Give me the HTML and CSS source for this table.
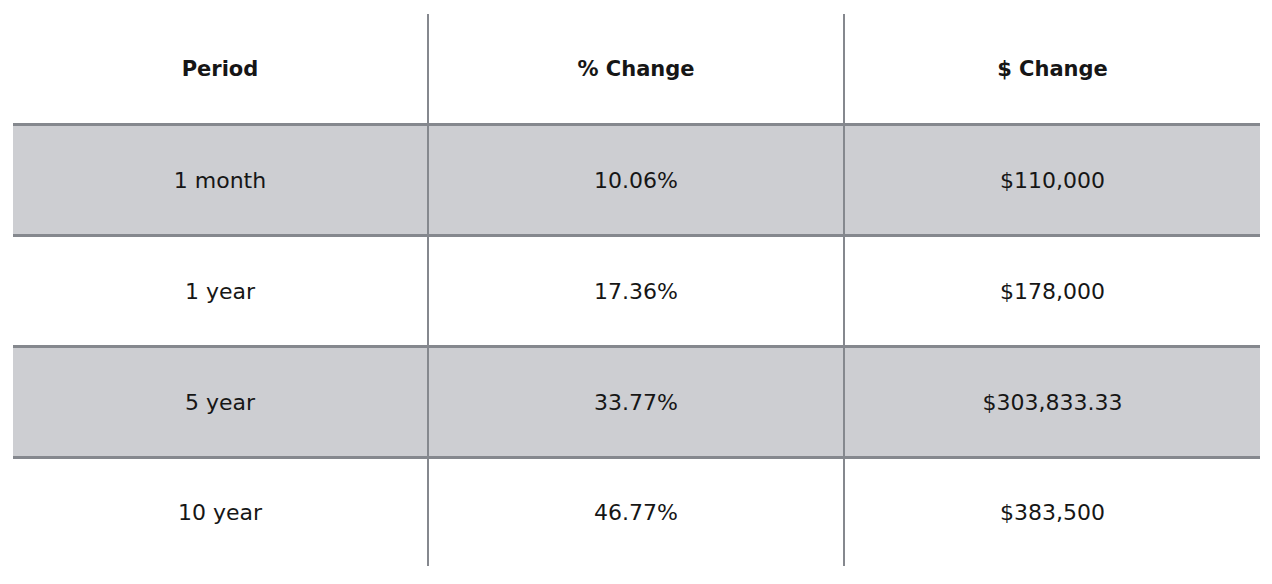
FILE: index.html
```html
<!DOCTYPE html>
<html>
<head>
<meta charset="utf-8">
<link rel="stylesheet" href="styles.css">
</head>
<body>
<div class="table">
  <div class="row head">
    <div class="cell">Period</div>
    <div class="cell">% Change</div>
    <div class="cell">$ Change</div>
  </div>
  <div class="row shaded">
    <div class="cell">1 month</div>
    <div class="cell">10.06%</div>
    <div class="cell">$110,000</div>
  </div>
  <div class="row">
    <div class="cell">1 year</div>
    <div class="cell">17.36%</div>
    <div class="cell">$178,000</div>
  </div>
  <div class="row shaded">
    <div class="cell">5 year</div>
    <div class="cell">33.77%</div>
    <div class="cell">$303,833.33</div>
  </div>
  <div class="row last">
    <div class="cell">10 year</div>
    <div class="cell">46.77%</div>
    <div class="cell">$383,500</div>
  </div>
</div>
</body>
</html>
```

FILE: styles.css
```css
html, body {
  margin: 0;
  padding: 0;
  background: #ffffff;
}

body {
  font-family: "DejaVu Sans", "Liberation Sans", sans-serif;
  color: #161616;
  padding: 14px 0 0 13px;
}

.table {
  width: 1247px;
  display: flex;
  flex-direction: column;
}

.row {
  display: grid;
  grid-template-columns: 414px 416px 417px;
  height: 108px;
  border-top: 3px solid #85888e;
}

.row.head {
  height: 109px;
  border-top: none;
}

.row.last {
  height: 107px;
}

.row.shaded {
  background: #cdced2;
}

.cell {
  display: flex;
  align-items: center;
  justify-content: center;
  font-size: 22px;
}

.cell + .cell {
  border-left: 2px solid #85888e;
}

.head .cell {
  font-weight: 700;
  font-size: 21px;
}
```
